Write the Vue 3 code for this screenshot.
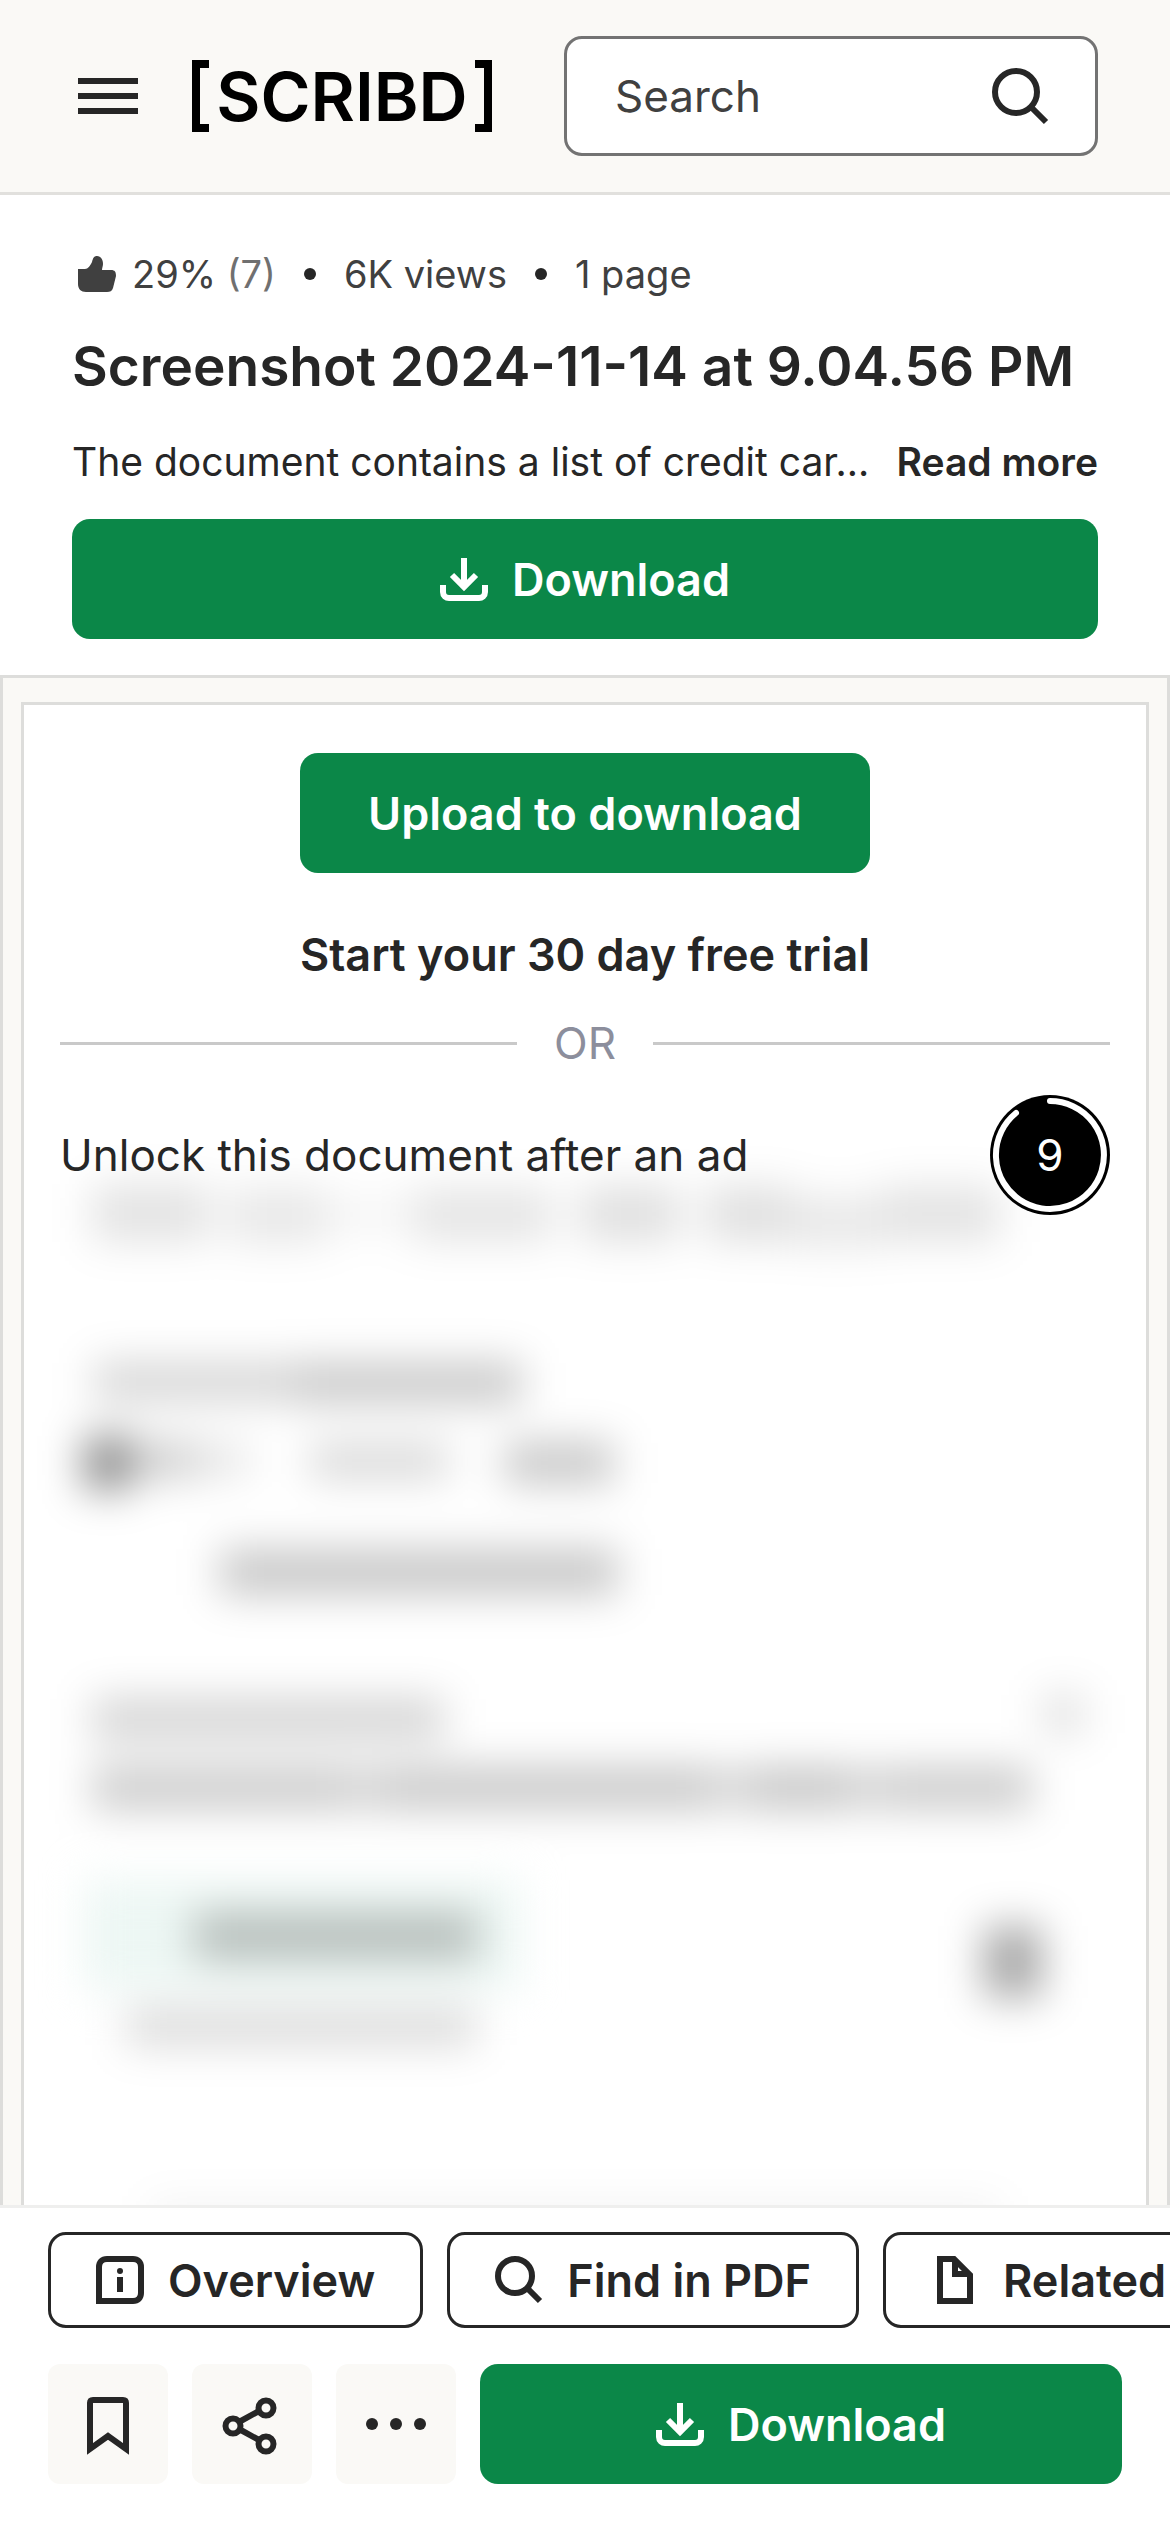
<script setup>
import { ref } from 'vue'

const query = ref('')
const secondsLeft = ref(9)

// Blurred preview of the locked page: x, y, width, height, darkness
const previewBars = [
  [92, 1184, 118, 58, 0.11],
  [228, 1188, 100, 56, 0.09],
  [330, 1196, 76, 36, 0.04],
  [412, 1188, 140, 54, 0.1],
  [580, 1186, 100, 56, 0.12],
  [706, 1186, 86, 56, 0.12],
  [792, 1196, 90, 52, 0.09],
  [882, 1186, 118, 56, 0.11],
  [94, 1362, 200, 40, 0.16],
  [294, 1362, 228, 42, 0.21],
  [84, 1436, 46, 54, 0.46],
  [130, 1442, 66, 36, 0.2],
  [196, 1444, 54, 32, 0.1],
  [310, 1444, 138, 34, 0.16],
  [504, 1442, 110, 42, 0.22],
  [220, 1549, 398, 46, 0.22],
  [92, 1698, 352, 42, 0.17],
  [1042, 1694, 42, 40, 0.12],
  [92, 1766, 254, 44, 0.2],
  [346, 1766, 40, 44, 0.17],
  [386, 1766, 326, 44, 0.21],
  [712, 1766, 38, 44, 0.15],
  [750, 1766, 100, 44, 0.22],
  [850, 1766, 36, 44, 0.16],
  [886, 1766, 146, 44, 0.2],
  [194, 1912, 284, 48, 0.23],
  [984, 1926, 58, 72, 0.34],
  [126, 2008, 350, 38, 0.14],
  [150, 2206, 850, 20, 0.07]
]
</script>

<template>
  <div class="page">
    <header class="topbar">
      <button class="menu" type="button" aria-label="Menu">
        <svg viewBox="0 0 60 36"><path d="M0 3h60M0 18h60M0 33h60" /></svg>
      </button>
      <a class="logo" href="#" aria-label="Scribd home">
        <svg viewBox="0 0 17 72"><path d="M17 4H4v64h13" /></svg>
        <span>SCRIBD</span>
        <svg viewBox="0 0 17 72"><path d="M0 4h13v64H0" /></svg>
      </a>
      <form class="search" role="search" @submit.prevent>
        <input v-model="query" type="text" placeholder="Search" aria-label="Search" />
        <button type="submit" aria-label="Submit search">
          <svg viewBox="0 0 60 60"><circle cx="26" cy="26" r="21" /><path d="M41 41l15 15" /></svg>
        </button>
      </form>
    </header>

    <section class="info">
      <div class="meta">
        <svg class="thumb" viewBox="0 0 48 48">
          <path d="M6 19h7c3 0 5-3 7-7 1-4 2-6 5-6 4 0 6 4 6 8 0 2-1 4-1 6h9c4 0 5 2 5 6l-3 12c-1 3-3 4-6 4H14c-5 0-8-3-8-8z" />
        </svg>
        <span class="rating">29% <em>(7)</em></span>
        <i class="bullet"></i>
        <span>6K views</span>
        <i class="bullet"></i>
        <span>1 page</span>
      </div>
      <h1>Screenshot 2024-11-14 at 9.04.56 PM</h1>
      <div class="summary">
        <p>The document contains a list of credit car...</p>
        <button type="button">Read more</button>
      </div>
      <button class="primary wide" type="button">
        <svg viewBox="0 0 48 48"><path d="M24 3v28M12 20l12 12 12-12M3 30v7c0 4 3 6 6 6h30c3 0 6-2 6-6v-7" /></svg>
        Download
      </button>
    </section>

    <main class="viewer">
      <article class="paper">
        <svg class="preview" viewBox="24 705 1122 1520" preserveAspectRatio="xMidYMin meet" aria-hidden="true">
          <defs>
            <filter id="soft" filterUnits="userSpaceOnUse" x="24" y="1100" width="1122" height="1125" color-interpolation-filters="sRGB">
              <feGaussianBlur stdDeviation="21" />
            </filter>
          </defs>
          <g filter="url(#soft)">
            <rect x="84" y="1880" width="436" height="110" fill="#edf7f4" />
            <rect v-for="(b, i) in previewBars" :key="i" :x="b[0]" :y="b[1]" :width="b[2]" :height="b[3]" :fill-opacity="b[4]" />
          </g>
        </svg>
        <div class="gate">
          <button class="primary upload" type="button">Upload to download</button>
          <a class="trial" href="#">Start your 30 day free trial</a>
          <div class="or"><span>OR</span></div>
          <div class="unlock">
            <p>Unlock this document after an ad</p>
            <div class="timer">
              <svg viewBox="0 0 120 120"><circle cx="60" cy="60" r="60" /><path d="M60 6A54 54 0 1 1 26 18" /></svg>
              <span>{{ secondsLeft }}</span>
            </div>
          </div>
        </div>
      </article>
    </main>

    <footer class="dock">
      <nav class="chips">
        <button type="button">
          <svg viewBox="0 0 48 48"><path d="M3 45V11c0-5 3-8 8-8h26c5 0 8 3 8 8v26c0 5-3 8-8 8z" /><path d="M24 21v15" /><circle class="dot" cx="24" cy="15" r="3" /></svg>
          Overview
        </button>
        <button type="button">
          <svg viewBox="0 0 48 48"><circle cx="20" cy="20" r="17" /><path d="M32 32l13 13" /></svg>
          Find in PDF
        </button>
        <button type="button">
          <svg viewBox="0 0 48 48"><path d="M9 3h14l16 16v26H9z" /><path d="M24 4v14h14" /></svg>
          Related
        </button>
      </nav>
      <div class="actions">
        <button class="tile" type="button" aria-label="Save">
          <svg viewBox="0 0 72 72"><path d="M18 61V15c0-2 1-3 3-3h30c2 0 3 1 3 3v46L36 48z" /></svg>
        </button>
        <button class="tile" type="button" aria-label="Share">
          <svg viewBox="0 0 72 72"><path d="M23 34l20-11M23 41l20 11" /><circle cx="17" cy="38" r="7.500" /><circle cx="50" cy="20" r="7.500" /><circle cx="50" cy="56" r="7.500" /></svg>
        </button>
        <button class="tile" type="button" aria-label="More options">
          <svg viewBox="0 0 72 72"><g class="dot"><circle cx="12" cy="36" r="6" /><circle cx="36" cy="36" r="6" /><circle cx="60" cy="36" r="6" /></g></svg>
        </button>
        <button class="primary" type="button">
          <svg viewBox="0 0 48 48"><path d="M24 3v28M12 20l12 12 12-12M3 30v7c0 4 3 6 6 6h30c3 0 6-2 6-6v-7" /></svg>
          Download
        </button>
      </div>
    </footer>
  </div>
</template>

<style>
body {
  margin: 0;
  background: #fff;
}
</style>

<style scoped>
.page {
  display: flex;
  flex-direction: column;
  height: 100vh;
  overflow: hidden;
  color: #262626;
  font-family: Inter, "Liberation Sans", sans-serif;
  font-size: 44px;
}
button {
  margin: 0;
  padding: 0;
  border: 0;
  background: none;
  color: inherit;
  font: inherit;
  cursor: pointer;
}
a {
  color: inherit;
  text-decoration: none;
}
p,
h1 {
  margin: 0;
}
svg {
  display: block;
  flex: none;
  fill: none;
  stroke: currentColor;
  stroke-width: 6px;
}
.dot {
  fill: currentColor;
  stroke: none;
}

.topbar {
  display: flex;
  flex: none;
  align-items: center;
  padding: 36px 72px 36px 78px;
  border-bottom: 3px solid #e1e0dd;
  background: #faf9f6;
}
.menu svg {
  width: 60px;
  height: 36px;
}
.logo {
  display: flex;
  align-items: center;
  justify-content: space-between;
  width: 300px;
  margin: 0 72px 0 54px;
  color: #000;
  font-size: 68px;
  font-weight: 600;
  line-height: 72px;
}
.logo svg {
  width: 17px;
  height: 72px;
  stroke-width: 8px;
}
.search {
  display: flex;
  flex: 1;
  align-items: center;
  min-width: 0;
  height: 120px;
  box-sizing: border-box;
  padding: 0 45px 0 48px;
  border: 3px solid #737373;
  border-radius: 18px;
  background: #fff;
}
.search input {
  flex: 1;
  width: 100%;
  min-width: 0;
  padding: 0;
  border: 0;
  outline: 0;
  background: none;
  color: #404040;
  font: inherit;
}
.search input::placeholder {
  color: #404040;
  opacity: 1;
}
.search svg {
  width: 60px;
  height: 60px;
}

.info {
  display: flex;
  flex: none;
  flex-direction: column;
  padding: 55px 72px 36px;
}
.meta {
  display: flex;
  align-items: center;
  gap: 28px;
  height: 48px;
  color: #404040;
  font-size: 38px;
  line-height: 48px;
}
.thumb {
  width: 48px;
  height: 48px;
  margin-right: -16px;
}
.thumb path {
  fill: currentColor;
  stroke: none;
}
.rating em {
  color: #707070;
  font-style: normal;
}
.bullet {
  width: 12px;
  height: 12px;
  border-radius: 50%;
  background: #262626;
}
h1 {
  margin-top: 32px;
  font-size: 55px;
  font-weight: 600;
  line-height: 72px;
  white-space: nowrap;
}
.summary {
  display: flex;
  justify-content: space-between;
  margin: 36px 0 33px;
  font-size: 39px;
  line-height: 48px;
  white-space: nowrap;
}
.summary button {
  font-weight: 600;
}
.primary {
  display: flex;
  flex: 1;
  align-items: center;
  justify-content: center;
  gap: 24px;
  height: 120px;
  border-radius: 18px;
  background: #0b8748;
  color: #fff;
  font-size: 45px;
  font-weight: 600;
}
.primary svg {
  width: 48px;
  height: 48px;
}
.primary.wide {
  flex: none;
}

.viewer {
  display: flex;
  flex: 1;
  min-height: 0;
  padding: 24px 18px 0;
  border: 3px solid #dddddb;
  border-bottom: 0;
  background: #faf9f6;
}
.paper {
  position: relative;
  flex: 1;
  overflow: hidden;
  border: 3px solid #dddddb;
  border-bottom: 0;
  background: #fff;
}
.preview {
  position: absolute;
  top: 0;
  left: 0;
  width: 100%;
  fill: #000;
  stroke: none;
}
.gate {
  position: relative;
  display: flex;
  flex-direction: column;
  align-items: center;
  padding: 48px 36px;
}
.upload {
  flex: none;
  padding: 0 68px;
}
.trial {
  margin-top: 52px;
  font-size: 45px;
  font-weight: 600;
  line-height: 60px;
}
.or {
  display: flex;
  align-items: center;
  align-self: stretch;
  gap: 37px;
  margin: 34px 0 28px;
  color: #8c8e9c;
  line-height: 48px;
}
.or::before,
.or::after {
  flex: 1;
  height: 3px;
  background: #c9c9c9;
  content: "";
}
.unlock {
  display: flex;
  align-items: center;
  align-self: stretch;
  justify-content: space-between;
}
.timer {
  display: grid;
  place-items: center;
  color: #fff;
}
.timer svg,
.timer span {
  grid-area: 1 / 1;
}
.timer svg {
  width: 120px;
  height: 120px;
  stroke-linecap: round;
}
.timer circle {
  fill: #000;
  stroke: none;
}

.dock {
  display: flex;
  flex: none;
  flex-direction: column;
  gap: 36px;
  padding: 24px 48px 48px;
  border-top: 3px solid #efefee;
  background: #fff;
}
.chips {
  display: flex;
  gap: 24px;
  margin-right: -48px;
  overflow: hidden;
}
.chips button {
  display: flex;
  flex: none;
  align-items: center;
  gap: 24px;
  height: 96px;
  padding: 0 45px;
  border: 3px solid #262626;
  border-radius: 18px;
  font-size: 45px;
  font-weight: 600;
  white-space: nowrap;
}
.chips svg {
  width: 48px;
  height: 48px;
}
.actions {
  display: flex;
  gap: 24px;
}
.tile {
  display: grid;
  place-items: center;
  width: 120px;
  height: 120px;
  border-radius: 12px;
  background: #faf9f6;
}
.tile svg {
  width: 72px;
  height: 72px;
}
</style>
